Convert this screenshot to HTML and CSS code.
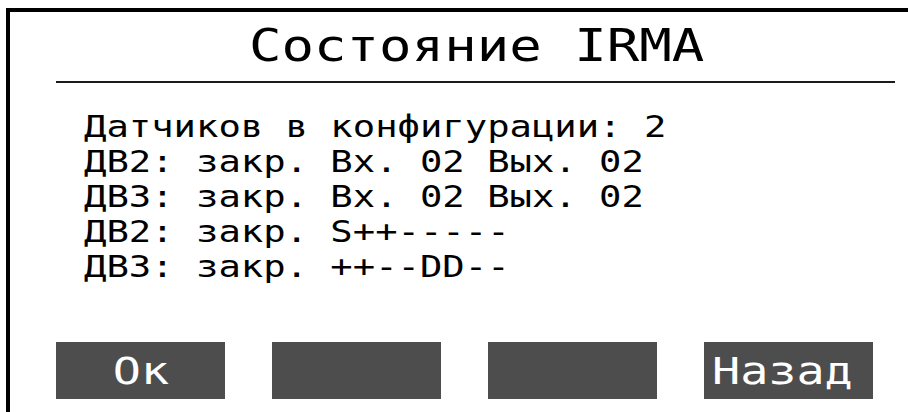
FILE: index.html
```html
<!DOCTYPE html>
<html lang="ru">
<head>
<meta charset="utf-8">
<title>Состояние IRMA</title>
<link rel="stylesheet" href="styles.css">
</head>
<body>
<div class="screen">
  <h1 class="screen-title"><span class="screen-title-text">Состояние IRMA</span></h1>
  <hr class="screen-rule">
  <div class="status">
    <div class="status-line">Датчиков в конфигурации: 2</div>
    <div class="status-line">ДВ2: закр. Вх. 02 Вых. 02</div>
    <div class="status-line">ДВ3: закр. Вх. 02 Вых. 02</div>
    <div class="status-line">ДВ2: закр. S++-----</div>
    <div class="status-line">ДВ3: закр. ++--DD--</div>
  </div>
  <div class="softkeys">
    <div class="softkey"><span class="softkey-label">Ок</span></div>
    <div class="softkey"></div>
    <div class="softkey"></div>
    <div class="softkey softkey-back"><span class="softkey-label">Назад</span></div>
  </div>
</div>
</body>
</html>
```

FILE: styles.css
```css
html, body {
  margin: 0;
  padding: 0;
  background: #fff;
}

body {
  width: 908px;
  height: 412px;
  overflow: hidden;
}

/* Display panel: only the top and left edges of its frame are in view.
   The panel font is a wide monospace, so glyphs are stretched horizontally. */
.screen {
  margin: 8px 0 0 6px;
  border-top: 4px solid #000;
  border-left: 4px solid #000;
  padding: 11px 13px 0 46px;
  height: 420px;
  box-sizing: border-box;
  font-family: "DejaVu Sans Mono", monospace;
  color: #000;
}

.screen-title {
  margin: 0;
  font-weight: normal;
  font-size: 45px;
  line-height: 46px;
  text-align: center;
  padding-left: 3px;
}

.screen-title-text {
  display: inline-block;
  transform: scaleX(1.2);
}

.screen-rule {
  margin: 12px 0 0;
  border: 0;
  height: 2px;
  background: #1a1a1a;
}

.status {
  margin-top: 26px;
  padding-left: 28px;
  font-size: 30px;
  line-height: 35px;
}

.status-line {
  width: max-content;
  white-space: pre;
  transform: scaleX(1.24);
  transform-origin: 0 0;
}

.softkeys {
  margin-top: 58px;
  display: flex;
  gap: 47px;
}

.softkey {
  width: 169px;
  height: 57px;
  background: #4d4d4d;
  color: #fff;
  font-size: 38px;
  line-height: 59px;
  text-align: center;
}

.softkey-label {
  display: inline-block;
  transform: scaleX(1.23);
}

.softkey-back {
  text-align: left;
  padding-left: 8px;
  box-sizing: border-box;
}

.softkey-back .softkey-label {
  transform-origin: 0 50%;
}
```
